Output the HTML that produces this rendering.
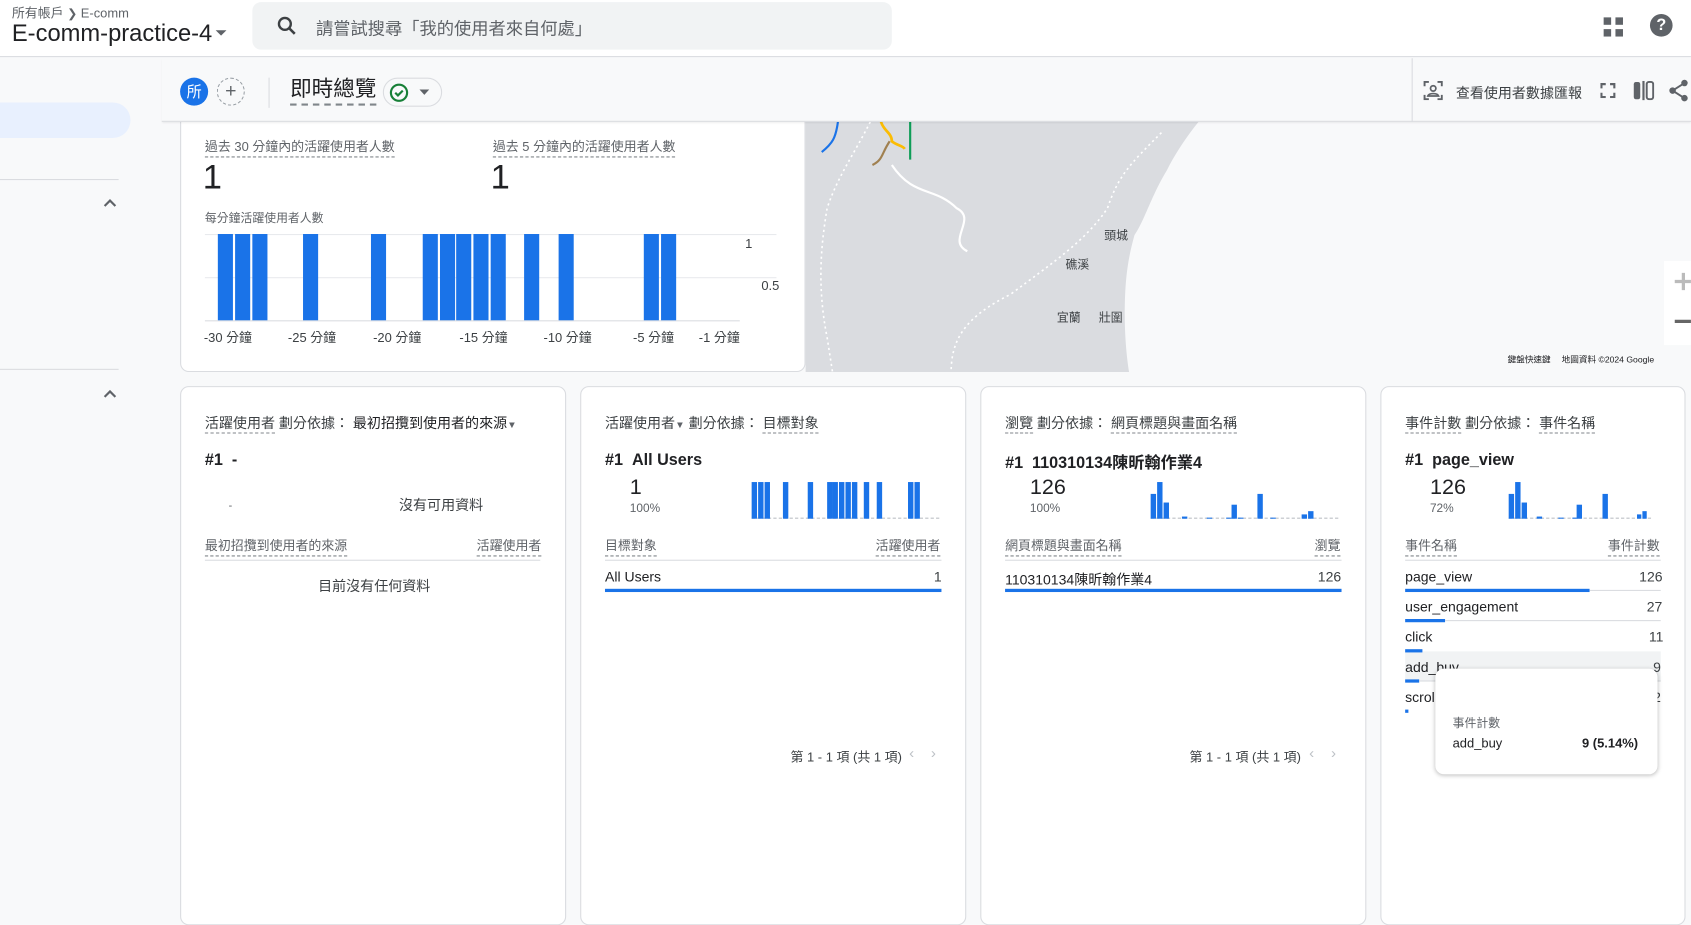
<!DOCTYPE html>
<html><head><meta charset="utf-8"><style>
*{box-sizing:border-box;margin:0;padding:0}
body{width:1691px;height:781px;overflow:hidden;background:#f8f9fa;font-family:"Liberation Sans","Noto Sans CJK TC",sans-serif;color:#202124;position:relative}
#w{position:absolute;left:0;top:0;width:1568px;height:725px;transform:scale(1.0784);transform-origin:0 0}
.a{position:absolute}
.dl{border-bottom:1px dashed #80868b;padding-bottom:1px}
.card{position:absolute;background:#fff;border:1px solid #dadce0;border-radius:8px}
.t13{font-size:13px;color:#3c4043;white-space:nowrap}
.t12{font-size:12px;color:#5f6368;white-space:nowrap}
.b{position:absolute;background:#1a73e8}
.g{position:absolute;background:#dadce0;height:1px}
.bar{position:absolute;background:#1a73e8;height:3px}
</style></head><body><div id="w">
<!-- sidebar -->
<div class="a" style="left:-20px;top:95px;width:141px;height:33px;background:#e8f0fe;border-radius:17px"></div>
<div class="g" style="left:0;top:166px;width:110px"></div>
<div class="g" style="left:0;top:342px;width:110px"></div>
<svg class="a" style="left:96px;top:184px" width="12" height="8"><path d="M1 7l5-5 5 5" fill="none" stroke="#5f6368" stroke-width="2"/></svg>
<svg class="a" style="left:96px;top:361px" width="12" height="8"><path d="M1 7l5-5 5 5" fill="none" stroke="#5f6368" stroke-width="2"/></svg>

<!-- map -->
<svg class="a" style="left:747px;top:100px" width="821" height="245">
<rect width="821" height="245" fill="#f8f9fa"/>
<path d="M0 0H375C358 20 345 38 335 58C320 83 315 103 305 118C298 143 296 163 296 193C296 213 298 233 300 245H0Z" fill="#dadce0"/>
<path d="M60 13C45 43 30 63 20 93C15 123 10 163 20 213L25 245" fill="none" stroke="#fff" stroke-width="1.5" stroke-dasharray="2 3"/>
<path d="M330 23C300 53 290 63 280 93C260 123 230 143 190 173C150 193 135 213 135 245" fill="none" stroke="#fff" stroke-width="1.5" stroke-dasharray="2 3"/>
<path d="M80 53C100 83 120 73 140 93C160 103 130 123 150 133" fill="none" stroke="#fff" stroke-width="2"/>
<path d="M30 13C28 28 25 33 15 41" fill="none" stroke="#1a73e8" stroke-width="2"/>
<path d="M70 13C72 21 80 23 80 31C85 35 90 35 92 38" fill="none" stroke="#fbbc04" stroke-width="2.5"/>
<path d="M97 13V48" fill="none" stroke="#0f9d58" stroke-width="2"/>
<path d="M78 31C70 43 72 48 62 53" fill="none" stroke="#a08050" stroke-width="2"/>
<text x="277" y="122" font-size="11" fill="#3c4043" font-family="Liberation Sans,Noto Sans CJK TC,sans-serif">頭城</text>
<text x="241" y="149" font-size="11" fill="#3c4043" font-family="Liberation Sans,Noto Sans CJK TC,sans-serif">礁溪</text>
<text x="233" y="198" font-size="11" fill="#3c4043" font-family="Liberation Sans,Noto Sans CJK TC,sans-serif">宜蘭</text>
<text x="272" y="198" font-size="11" fill="#3c4043" font-family="Liberation Sans,Noto Sans CJK TC,sans-serif">壯圍</text>
<text x="651" y="236" font-size="8" fill="#202124" font-family="Liberation Sans,Noto Sans CJK TC,sans-serif">鍵盤快速鍵　 地圖資料 ©2024 Google</text>
<rect x="796" y="142" width="30" height="78" fill="#fff"/>
<path d="M806 161h16M814 153v16" stroke="#bbb" stroke-width="3"/><path d="M806 198h16" stroke="#666" stroke-width="3"/>
</svg>

<!-- top card -->
<div class="card" style="left:167px;top:90px;width:580px;height:255px"></div>

<!-- header -->
<div class="a" style="left:0;top:0;width:1568px;height:53px;background:#fff;border-bottom:1px solid #dadce0"></div>
<div class="a t12" style="left:11px;top:3px;font-size:12px;color:#5f6368">所有帳戶 <span style="font-size:11px">❯</span> E-comm</div>
<div class="a" style="left:11px;top:18px;font-size:22px;color:#202124;white-space:nowrap">E-comm-practice-4</div>
<svg class="a" style="left:199px;top:27px" width="12" height="8"><path d="M1 1h10L6 6z" fill="#5f6368"/></svg>
<div class="a" style="left:234px;top:2px;width:593px;height:44px;background:#f1f3f4;border-radius:8px"></div>
<svg class="a" style="left:255px;top:13px" width="22" height="22" viewBox="0 0 24 24"><circle cx="10" cy="10" r="6" fill="none" stroke="#3c4043" stroke-width="2.4"/><path d="M14.5 14.5L20 20" stroke="#3c4043" stroke-width="2.6"/></svg>
<div class="a" style="left:293px;top:13px;font-size:16px;color:#5f6368;white-space:nowrap">請嘗試搜尋「我的使用者來自何處」</div>
<svg class="a" style="left:1487px;top:16px" width="18" height="18"><rect x="0" y="0" width="7" height="7" fill="#5f6368"/><rect x="11" y="0" width="7" height="7" fill="#5f6368"/><rect x="0" y="11" width="7" height="7" fill="#5f6368"/><rect x="11" y="11" width="7" height="7" fill="#5f6368"/></svg>
<div class="a" style="left:1530px;top:13px;width:21px;height:21px;border-radius:50%;background:#5f6368;color:#fff;font-weight:bold;font-size:15px;text-align:center;line-height:21px">?</div>

<!-- toolbar -->
<div class="a" style="left:150px;top:54px;width:1418px;height:59px;background:#f8f9fa;border-bottom:1px solid #dadce0;box-shadow:0 1px 2px rgba(0,0,0,.08)"></div>
<div class="a" style="left:167px;top:72px;width:26px;height:26px;border-radius:50%;background:#1a73e8;color:#fff;font-size:14px;text-align:center;line-height:26px">所</div>
<div class="a" style="left:201px;top:72px;width:26px;height:26px;border-radius:50%;border:1px dashed #9aa0a6;color:#5f6368;font-size:18px;text-align:center;line-height:23px">+</div>
<div class="a" style="left:249px;top:72px;width:1px;height:28px;background:#dadce0"></div>
<div class="a" style="left:269px;top:70px;font-size:20px;color:#202124;border-bottom:2px dashed #80868b;line-height:26px">即時總覽</div>
<div class="a" style="left:355px;top:72px;width:55px;height:27px;border:1px solid #dadce0;border-radius:14px"></div>
<svg class="a" style="left:361px;top:77px" width="18" height="18"><circle cx="9" cy="9" r="7.5" fill="none" stroke="#188038" stroke-width="2"/><path d="M5.5 9l2.5 2.5 4.5-4.5" fill="none" stroke="#188038" stroke-width="2"/></svg>
<svg class="a" style="left:389px;top:83px" width="10" height="6"><path d="M0 0h9L4.5 5z" fill="#5f6368"/></svg>
<div class="a" style="left:1309px;top:54px;width:1px;height:59px;background:#dadce0"></div>
<svg class="a" style="left:1320px;top:75px" width="18" height="18"><path d="M1 5V1h4M13 1h4v4M17 13v4h-4M5 17H1v-4" fill="none" stroke="#5f6368" stroke-width="1.8"/><circle cx="9" cy="7" r="2.5" fill="none" stroke="#5f6368" stroke-width="1.6"/><path d="M4 14c1-3 9-3 10 0z" fill="none" stroke="#5f6368" stroke-width="1.6"/></svg>
<div class="a" style="left:1350px;top:76px;font-size:13px;color:#3c4043;white-space:nowrap">查看使用者數據匯報</div>
<svg class="a" style="left:1484px;top:77px" width="14" height="14"><path d="M1 5V1h4M9 1h4v4M13 9v4H9M5 13H1V9" fill="none" stroke="#5f6368" stroke-width="2"/></svg>
<svg class="a" style="left:1514px;top:75px" width="20" height="18"><rect x="1" y="1" width="6" height="16" rx="2" fill="#5f6368"/><rect x="9" y="0" width="2" height="18" fill="#5f6368"/><rect x="13" y="1" width="6" height="16" rx="2" fill="none" stroke="#5f6368" stroke-width="1.8"/></svg>
<svg class="a" style="left:1547px;top:73px" width="20" height="22"><circle cx="15" cy="4" r="3" fill="#5f6368"/><circle cx="4" cy="11" r="3" fill="#5f6368"/><circle cx="15" cy="18" r="3" fill="#5f6368"/><path d="M15 4L4 11l11 7" fill="none" stroke="#5f6368" stroke-width="1.8"/></svg>

<!-- top card content -->
<div class="a t12 dl" style="left:190px;top:127px;color:#5f6368">過去 30 分鐘內的活躍使用者人數</div>
<div class="a" style="left:188px;top:146px;font-size:32px;color:#202124">1</div>
<div class="a t12 dl" style="left:457px;top:127px;color:#5f6368">過去 5 分鐘內的活躍使用者人數</div>
<div class="a" style="left:455px;top:146px;font-size:32px;color:#202124">1</div>
<div class="a" style="left:190px;top:194px;font-size:11px;color:#5f6368">每分鐘活躍使用者人數</div>
<div class="g" style="left:190px;top:217px;width:530px;background:#e8eaed"></div>
<div class="g" style="left:190px;top:257px;width:530px;background:#e8eaed"></div>
<div class="g" style="left:190px;top:297px;width:496px;background:#dadce0"></div>
<div class="a" style="left:691px;top:219px;font-size:12px;color:#3c4043">1</div>
<div class="a" style="left:706px;top:258px;font-size:12px;color:#3c4043">0.5</div>
<div class="b" style="left:202px;top:217px;width:14px;height:80px"></div>
<div class="b" style="left:218px;top:217px;width:14px;height:80px"></div>
<div class="b" style="left:234px;top:217px;width:14px;height:80px"></div>
<div class="b" style="left:281px;top:217px;width:14px;height:80px"></div>
<div class="b" style="left:344px;top:217px;width:14px;height:80px"></div>
<div class="b" style="left:392px;top:217px;width:14px;height:80px"></div>
<div class="b" style="left:408px;top:217px;width:14px;height:80px"></div>
<div class="b" style="left:423px;top:217px;width:14px;height:80px"></div>
<div class="b" style="left:439px;top:217px;width:14px;height:80px"></div>
<div class="b" style="left:455px;top:217px;width:14px;height:80px"></div>
<div class="b" style="left:486px;top:217px;width:14px;height:80px"></div>
<div class="b" style="left:518px;top:217px;width:14px;height:80px"></div>
<div class="b" style="left:597px;top:217px;width:14px;height:80px"></div>
<div class="b" style="left:613px;top:217px;width:14px;height:80px"></div>
<div class="a t12" style="left:189px;top:304px;color:#3c4043">-30 分鐘</div>
<div class="a t12" style="left:267px;top:304px;color:#3c4043">-25 分鐘</div>
<div class="a t12" style="left:346px;top:304px;color:#3c4043">-20 分鐘</div>
<div class="a t12" style="left:426px;top:304px;color:#3c4043">-15 分鐘</div>
<div class="a t12" style="left:504px;top:304px;color:#3c4043">-10 分鐘</div>
<div class="a t12" style="left:587px;top:304px;color:#3c4043">-5 分鐘</div>
<div class="a t12" style="left:648px;top:304px;color:#3c4043">-1 分鐘</div>

<!-- card 1 -->
<div class="card" style="left:167px;top:358px;width:358px;height:500px"></div>
<div class="a t13" style="left:190px;top:382px"><span class="dl">活躍使用者</span> 劃分依據： <span style="color:#202124">最初招攬到使用者的來源</span><span style="font-size:9px;color:#5f6368">▼</span></div>
<div class="a" style="left:190px;top:418px;font-size:15px;font-weight:bold;color:#202124">#1 &nbsp;-</div>
<div class="a" style="left:212px;top:464px;font-size:10px;color:#5f6368">-</div>
<div class="a t13" style="left:370px;top:458px">沒有可用資料</div>
<div class="a t12 dl" style="left:190px;top:497px">最初招攬到使用者的來源</div>
<div class="a t12 dl" style="left:442px;top:497px">活躍使用者</div>
<div class="g" style="left:190px;top:519px;width:311px"></div>
<div class="a t13" style="left:295px;top:533px">目前沒有任何資料</div>

<!-- card 2 -->
<div class="card" style="left:538px;top:358px;width:358px;height:500px"></div>
<div class="a t13" style="left:561px;top:382px"><span>活躍使用者</span><span style="font-size:9px;color:#5f6368">▼</span> 劃分依據： <span class="dl">目標對象</span></div>
<div class="a" style="left:561px;top:418px;font-size:15px;font-weight:bold;color:#202124">#1 &nbsp;All Users</div>
<div class="a" style="left:584px;top:441px;font-size:20px">1</div>
<div class="a t12" style="left:584px;top:466px;font-size:11px">100%</div>
<div class="a" style="left:697px;top:480px;width:174px;border-top:1px dashed #bdc1c6"></div>
<div class="b" style="left:697px;top:447px;width:5px;height:34px"></div>
<div class="b" style="left:703px;top:447px;width:5px;height:34px"></div>
<div class="b" style="left:709px;top:447px;width:5px;height:34px"></div>
<div class="b" style="left:726px;top:447px;width:5px;height:34px"></div>
<div class="b" style="left:749px;top:447px;width:5px;height:34px"></div>
<div class="b" style="left:767px;top:447px;width:5px;height:34px"></div>
<div class="b" style="left:772px;top:447px;width:5px;height:34px"></div>
<div class="b" style="left:778px;top:447px;width:5px;height:34px"></div>
<div class="b" style="left:784px;top:447px;width:5px;height:34px"></div>
<div class="b" style="left:790px;top:447px;width:5px;height:34px"></div>
<div class="b" style="left:801px;top:447px;width:5px;height:34px"></div>
<div class="b" style="left:813px;top:447px;width:5px;height:34px"></div>
<div class="b" style="left:842px;top:447px;width:5px;height:34px"></div>
<div class="b" style="left:848px;top:447px;width:5px;height:34px"></div>
<div class="a t12 dl" style="left:561px;top:497px">目標對象</div>
<div class="a t12 dl" style="left:812px;top:497px">活躍使用者</div>
<div class="g" style="left:561px;top:519px;width:312px"></div>
<div class="a t13" style="left:561px;top:527px;color:#202124">All Users</div>
<div class="a t13" style="left:866px;top:527px">1</div>
<div class="bar" style="left:561px;top:546px;width:312px"></div>
<div class="a t12" style="left:733px;top:693px;color:#3c4043">第 1 - 1 項 (共 1 項)</div>
<div class="a" style="left:843px;top:690px;font-size:14px;color:#bdc1c6">‹&nbsp;&nbsp;&nbsp;&nbsp;›</div>

<!-- card 3 -->
<div class="card" style="left:909px;top:358px;width:358px;height:500px"></div>
<div class="a t13" style="left:932px;top:382px"><span class="dl">瀏覽</span> 劃分依據： <span class="dl">網頁標題與畫面名稱</span></div>
<div class="a" style="left:932px;top:418px;font-size:15px;font-weight:bold;color:#202124">#1 &nbsp;110310134陳昕翰作業4</div>
<div class="a" style="left:955px;top:441px;font-size:20px">126</div>
<div class="a t12" style="left:955px;top:466px;font-size:11px">100%</div>
<div class="a" style="left:1067px;top:480px;width:174px;border-top:1px dashed #bdc1c6"></div>
<div class="b" style="left:1067px;top:458px;width:5px;height:23px"></div>
<div class="b" style="left:1073px;top:447px;width:5px;height:34px"></div>
<div class="b" style="left:1079px;top:466px;width:5px;height:15px"></div>
<div class="b" style="left:1096px;top:479px;width:5px;height:2px"></div>
<div class="b" style="left:1119px;top:480px;width:5px;height:1px"></div>
<div class="b" style="left:1137px;top:480px;width:5px;height:1px"></div>
<div class="b" style="left:1142px;top:468px;width:5px;height:13px"></div>
<div class="b" style="left:1148px;top:480px;width:5px;height:1px"></div>
<div class="b" style="left:1166px;top:458px;width:5px;height:23px"></div>
<div class="b" style="left:1178px;top:480px;width:5px;height:1px"></div>
<div class="b" style="left:1207px;top:477px;width:5px;height:4px"></div>
<div class="b" style="left:1213px;top:474px;width:5px;height:7px"></div>
<div class="a t12 dl" style="left:932px;top:497px">網頁標題與畫面名稱</div>
<div class="a t12 dl" style="left:1219px;top:497px">瀏覽</div>
<div class="g" style="left:932px;top:519px;width:312px"></div>
<div class="a t13" style="left:932px;top:527px;color:#202124">110310134陳昕翰作業4</div>
<div class="a t13" style="left:1222px;top:527px">126</div>
<div class="bar" style="left:932px;top:546px;width:312px"></div>
<div class="a t12" style="left:1103px;top:693px;color:#3c4043">第 1 - 1 項 (共 1 項)</div>
<div class="a" style="left:1214px;top:690px;font-size:14px;color:#bdc1c6">‹&nbsp;&nbsp;&nbsp;&nbsp;›</div>

<!-- card 4 -->
<div class="card" style="left:1280px;top:358px;width:283px;height:500px"></div>
<div class="a t13" style="left:1303px;top:382px"><span class="dl">事件計數</span> 劃分依據： <span class="dl">事件名稱</span></div>
<div class="a" style="left:1303px;top:418px;font-size:15px;font-weight:bold;color:#202124">#1 &nbsp;page_view</div>
<div class="a" style="left:1326px;top:441px;font-size:20px">126</div>
<div class="a t12" style="left:1326px;top:466px;font-size:11px">72%</div>
<div class="a" style="left:1399px;top:480px;width:132px;border-top:1px dashed #bdc1c6"></div>
<div class="b" style="left:1399px;top:458px;width:5px;height:23px"></div>
<div class="b" style="left:1405px;top:447px;width:5px;height:34px"></div>
<div class="b" style="left:1411px;top:466px;width:5px;height:15px"></div>
<div class="b" style="left:1425px;top:479px;width:5px;height:2px"></div>
<div class="b" style="left:1445px;top:480px;width:5px;height:1px"></div>
<div class="b" style="left:1458px;top:480px;width:5px;height:1px"></div>
<div class="b" style="left:1462px;top:468px;width:5px;height:13px"></div>
<div class="b" style="left:1486px;top:458px;width:5px;height:23px"></div>
<div class="b" style="left:1518px;top:477px;width:4px;height:4px"></div>
<div class="b" style="left:1523px;top:474px;width:4px;height:7px"></div>
<div class="a t12 dl" style="left:1303px;top:497px">事件名稱</div>
<div class="a t12 dl" style="left:1491px;top:497px">事件計數</div>
<div class="g" style="left:1303px;top:519px;width:237px"></div>
<div class="a" style="left:1303px;top:604px;width:237px;height:28px;background:#f1f3f4"></div>
<div class="a t13" style="left:1303px;top:527px;color:#202124">page_view</div><div class="a t13" style="left:1520px;top:527px">126</div>
<div class="bar" style="left:1303px;top:546px;width:171px"></div><div class="g" style="left:1474px;top:547px;width:66px"></div>
<div class="a t13" style="left:1303px;top:555px;color:#202124">user_engagement</div><div class="a t13" style="left:1527px;top:555px">27</div>
<div class="bar" style="left:1303px;top:574px;width:37px"></div><div class="g" style="left:1340px;top:575px;width:200px"></div>
<div class="a t13" style="left:1303px;top:583px;color:#202124">click</div><div class="a t13" style="left:1529px;top:583px">11</div>
<div class="bar" style="left:1303px;top:602px;width:16px"></div>
<div class="a t13" style="left:1303px;top:611px;color:#202124">add_buy</div><div class="a t13" style="left:1533px;top:611px">9</div>
<div class="bar" style="left:1303px;top:630px;width:13px"></div><div class="g" style="left:1316px;top:631px;width:224px"></div>
<div class="a t13" style="left:1303px;top:639px;color:#202124">scroll</div><div class="a t13" style="left:1533px;top:639px">2</div>
<div class="bar" style="left:1303px;top:658px;width:3px"></div>
<div class="a" style="left:1331px;top:620px;width:206px;height:98px;background:#fff;border-radius:8px;box-shadow:0 1px 4px rgba(0,0,0,.25)"></div>
<div class="a" style="left:1347px;top:662px;font-size:11px;color:#5f6368">事件計數</div>
<div class="a" style="left:1347px;top:682px;font-size:12px;color:#202124">add_buy</div>
<div class="a" style="left:1467px;top:682px;font-size:12px;font-weight:bold;color:#202124">9 (5.14%)</div>
</div></body></html>
